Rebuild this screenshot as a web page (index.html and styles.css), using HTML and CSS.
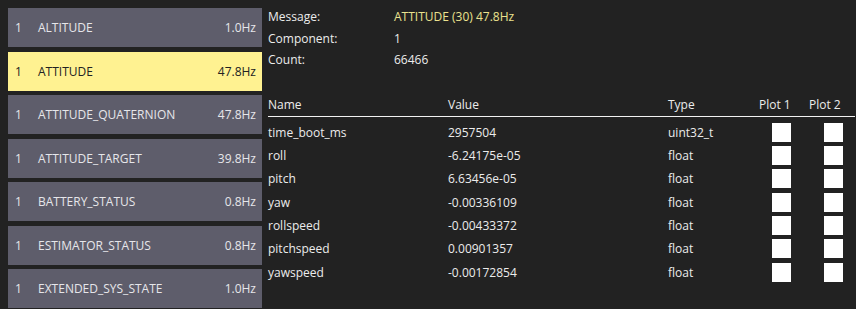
FILE: index.html
```html
<!DOCTYPE html>
<html lang="en">
  <head>
    <meta charset="UTF-8" />
    <title>MAVLink Inspector</title>
    <link rel="stylesheet" href="styles.css">
  </head>
  <body>
    <div class="message-list">
      <div class="message-item"><span class="comp">1</span><span class="name">ALTITUDE</span><span class="rate">1.0Hz</span></div>
      <div class="message-item selected"><span class="comp">1</span><span class="name">ATTITUDE</span><span class="rate">47.8Hz</span></div>
      <div class="message-item"><span class="comp">1</span><span class="name">ATTITUDE_QUATERNION</span><span class="rate">47.8Hz</span></div>
      <div class="message-item"><span class="comp">1</span><span class="name">ATTITUDE_TARGET</span><span class="rate">39.8Hz</span></div>
      <div class="message-item"><span class="comp">1</span><span class="name">BATTERY_STATUS</span><span class="rate">0.8Hz</span></div>
      <div class="message-item"><span class="comp">1</span><span class="name">ESTIMATOR_STATUS</span><span class="rate">0.8Hz</span></div>
      <div class="message-item"><span class="comp">1</span><span class="name">EXTENDED_SYS_STATE</span><span class="rate">1.0Hz</span></div>
    </div>

    <div class="detail">
      <div class="info">
        <span>Message:</span><span class="highlight">ATTITUDE (30) 47.8Hz</span>
        <span>Component:</span><span>1</span>
        <span>Count:</span><span>66466</span>
      </div>

      <div class="fields">
        <div>Name</div><div>Value</div><div>Type</div><div>Plot 1</div><div>Plot 2</div>
        <div class="rule"></div>

        <div>time_boot_ms</div><div>2957504</div><div>uint32_t</div><div class="plot1"><span class="check"></span></div><div class="plot2"><span class="check"></span></div>
        <div>roll</div><div>-6.24175e-05</div><div>float</div><div class="plot1"><span class="check"></span></div><div class="plot2"><span class="check"></span></div>
        <div>pitch</div><div>6.63456e-05</div><div>float</div><div class="plot1"><span class="check"></span></div><div class="plot2"><span class="check"></span></div>
        <div>yaw</div><div>-0.00336109</div><div>float</div><div class="plot1"><span class="check"></span></div><div class="plot2"><span class="check"></span></div>
        <div>rollspeed</div><div>-0.00433372</div><div>float</div><div class="plot1"><span class="check"></span></div><div class="plot2"><span class="check"></span></div>
        <div>pitchspeed</div><div>0.00901357</div><div>float</div><div class="plot1"><span class="check"></span></div><div class="plot2"><span class="check"></span></div>
        <div>yawspeed</div><div>-0.00172854</div><div>float</div><div class="plot1"><span class="check"></span></div><div class="plot2"><span class="check"></span></div>
      </div>
    </div>
  </body>
</html>
```

FILE: styles.css
```css
body {
  background-color: #222222;
  margin: 0;
  padding: 8px 0 0 8px;
  height: 309px;
  box-sizing: border-box;
  overflow: hidden;
  display: flex;
  gap: 6px;
  font-family: "Open Sans", sans-serif;
  font-size: 12px;
  color: #ececec;
}
.message-list {
  width: 254px;
  flex-shrink: 0;
  display: flex;
  flex-direction: column;
  gap: 4.5px;
}
.message-item {
  height: 39px;
  flex-shrink: 0;
  background-color: #5e5d6b;
  display: flex;
  align-items: center;
  padding: 0 6px 0 7px;
  color: #e6e6ea;
}
.message-item.selected {
  background-color: #fff291;
  color: #222222;
}
.message-item .comp {
  width: 23px;
}
.message-item .name {
  flex: 1;
}
.detail {
  flex: 1;
  display: flex;
  flex-direction: column;
}
.info {
  display: grid;
  grid-template-columns: 126px 1fr;
  grid-auto-rows: 21.5px;
  align-items: center;
  margin-top: -2px;
}
.highlight {
  color: #ece28f;
}
.fields {
  display: grid;
  grid-template-columns: 180px 220px 91px 50px 1fr;
  grid-template-rows: 23px 5px;
  grid-auto-rows: 23.33px;
  align-items: center;
  margin-top: 22px;
}
.fields .rule {
  grid-column: 1 / -1;
  height: 1px;
  background-color: #f2f2f2;
  align-self: start;
  margin-right: 1px;
}
.plot1,
.plot2 {
  display: flex;
}
.plot1 {
  padding-left: 13px;
}
.plot2 {
  padding-left: 15px;
}
.check {
  width: 19px;
  height: 19px;
  background-color: #ffffff;
}
```
